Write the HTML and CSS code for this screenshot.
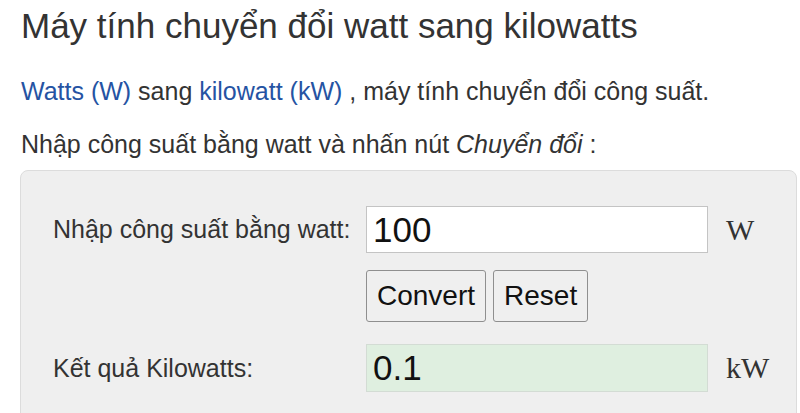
FILE: index.html
```html
<!DOCTYPE html>
<html lang="vi">
<head>
    <meta charset="UTF-8">
    <meta name="viewport" content="width=device-width, initial-scale=1.0">
    <title>Máy tính chuyển đổi watt sang kilowatts</title>
    <link rel="stylesheet" href="styles.css">
</head>
<body>
    <h1 class="title">Máy tính chuyển đổi watt sang kilowatts</h1>
    <p class="intro"><a href="#">Watts (W)</a> sang <a href="#">kilowatt (kW)</a> , máy tính chuyển đổi công suất.</p>
    <p class="hint">Nhập công suất bằng watt và nhấn nút <i>Chuyển đổi</i> :</p>
    <div class="calc">
        <form name="calcForm" class="calc_grid">
            <label class="lbl" for="watts">Nhập công suất bằng watt:</label>
            <input type="text" class="num" id="watts" value="100">
            <span class="unit">W</span>

            <span></span>
            <div class="btns">
                <button type="button" class="btn">Convert</button><button type="reset" class="btn">Reset</button>
            </div>
            <span></span>

            <label class="lbl" for="kw">Kết quả Kilowatts:</label>
            <input type="text" class="num result" id="kw" value="0.1" readonly>
            <span class="unit">kW</span>
        </form>
    </div>
</body>
</html>
```

FILE: styles.css
```css
body { margin: 0; padding: 0 0 0 21px; font-family: "Liberation Sans", Arial, sans-serif; font-size: 25px; color: #333; background: #fff; }
.title { margin: 6px 0 0; font-size: 35px; line-height: 40px; font-weight: normal; color: #333; }
.intro { margin: 31px 0 0; line-height: 29px; }
.intro a { color: #2553a3; text-decoration: none; }
.hint { margin: 24px 0 0; line-height: 29px; }
.calc { margin: 11px 0 0 -1px; width: 775px; height: 280px; background: #efefef; border: 1px solid #dcdcdc; border-radius: 8px; }
.calc_grid { display: grid; grid-template-columns: 295px 342px auto; row-gap: 17px; column-gap: 18px; align-items: center; padding: 35px 0 0 32px; }
.calc_grid > :nth-child(7) { margin-top: 5px; }
.calc_grid > :nth-child(8) { margin-top: 5px; }
.calc_grid > :nth-child(9) { margin-top: 5px; }
.lbl { color: #333; white-space: nowrap; }
.num { box-sizing: border-box; width: 342px; height: 47px; margin: 0; padding: 0 6px; font-family: "Liberation Sans", Arial, sans-serif; font-size: 35px; color: #111; background: #fff; border: 1px solid #c4c4c4; border-radius: 0; outline: none; }
.result { height: 48px; background: #dfefe0; border-color: #d3dcd4; }
.unit { font-family: "Liberation Serif", "Times New Roman", serif; font-size: 30px; color: #333; }
.btns { display: flex; gap: 7px; }
.btn { box-sizing: border-box; height: 52px; padding: 0 10px; font-family: "Liberation Sans", Arial, sans-serif; font-size: 28px; color: #111; background: #efefef; border: 1px solid #8f8f8f; border-radius: 3px; }
```
